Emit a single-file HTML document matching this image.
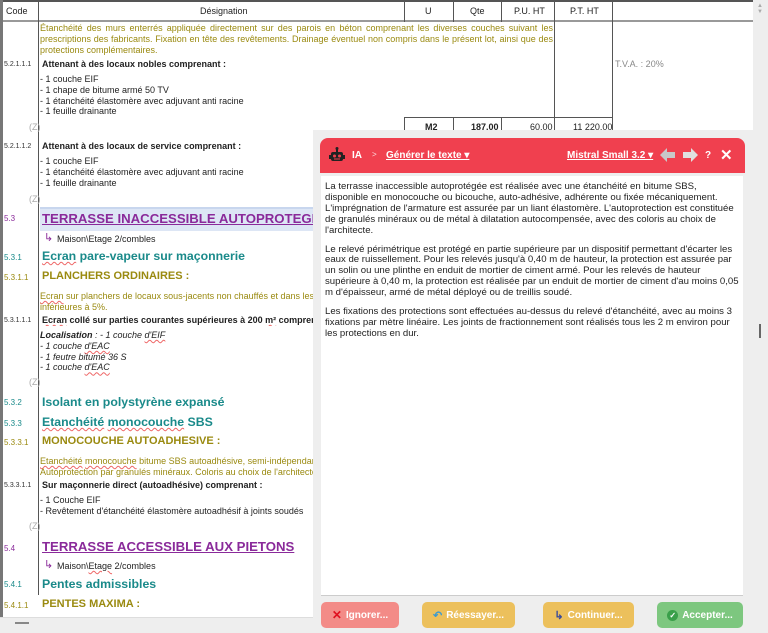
<!DOCTYPE html>
<html><head><meta charset="utf-8"><style>
*{margin:0;padding:0;box-sizing:border-box}
body{width:768px;height:633px;overflow:hidden;background:#fff;font-family:"Liberation Sans",Arial,sans-serif;position:relative;color:#222}
.a{position:absolute;white-space:nowrap}
.code{font-size:7px;color:#333;left:4px}
.t{font-size:9px;color:#222;left:40px;line-height:10.8px}
.z{font-size:9px;color:#aaa;left:29px}
.ol{color:#9a8a10}
.tl{color:#1a8a8a}
.pu{color:#8a2a9a}
.h1{font-size:13.2px;font-weight:bold;left:42px}
.h2{font-size:12.3px;font-weight:bold;left:42px}
.h3{font-size:11px;font-weight:bold;left:42px}
.sq{text-decoration:underline wavy #e66;text-decoration-thickness:1px}
.j{display:block;text-align:justify;text-align-last:justify;width:513px}
.btn{position:absolute;top:602px;height:26px;border-radius:5px;color:#fff;font-size:10px;font-weight:bold;display:flex;align-items:center;justify-content:center;gap:4px}
</style></head><body>
<div class="a" style="left:0;top:0;width:3px;height:633px;background:#777"></div>
<div class="a" style="left:3px;top:0;width:750px;height:22px;border-top:2px solid #555;border-bottom:2px solid #999"></div>
<div class="a" style="left:38px;top:0;width:1px;height:22px;background:#555"></div>
<div class="a" style="left:404px;top:0;width:1px;height:22px;background:#555"></div>
<div class="a" style="left:453px;top:0;width:1px;height:22px;background:#555"></div>
<div class="a" style="left:501px;top:0;width:1px;height:22px;background:#555"></div>
<div class="a" style="left:554px;top:0;width:1px;height:22px;background:#555"></div>
<div class="a" style="left:612px;top:0;width:1px;height:22px;background:#555"></div>
<div class="a" style="left:6px;top:6px;font-size:9px">Code</div>
<div class="a" style="left:200px;top:6px;font-size:9px">Désignation</div>
<div class="a" style="left:425px;top:6px;font-size:9px">U</div>
<div class="a" style="left:470px;top:6px;font-size:9px">Qte</div>
<div class="a" style="left:514px;top:6px;font-size:9px">P.U. HT</div>
<div class="a" style="left:570px;top:6px;font-size:9px">P.T. HT</div>
<div class="a" style="left:38px;top:22px;width:1px;height:573px;background:#555"></div>
<div class="a" style="left:554px;top:22px;width:1px;height:112px;background:#555"></div>
<div class="a" style="left:612px;top:22px;width:1px;height:112px;background:#555"></div>
<div class="a" style="left:404px;top:117px;width:209px;height:1px;background:#555"></div>
<div class="a" style="left:404px;top:117px;width:1px;height:17px;background:#555"></div>
<div class="a" style="left:453px;top:117px;width:1px;height:17px;background:#555"></div>
<div class="a" style="left:501px;top:117px;width:1px;height:17px;background:#555"></div>
<div class="a" style="left:425px;top:122px;font-size:9px;font-weight:bold">M2</div>
<div class="a" style="left:471px;top:122px;font-size:9px;font-weight:bold">187,00</div>
<div class="a" style="left:530px;top:122px;font-size:9px">60,00</div>
<div class="a" style="left:573px;top:122px;font-size:9px">11 220,00</div>
<div class="a" style="left:615px;top:59px;font-size:9px;color:#888">T.V.A. : 20%</div>
<div class="a" style="left:753px;top:0;width:15px;height:633px;background:#eee"></div>
<div class="a" style="left:757px;top:3px;font-size:6px;color:#aaa">▲<br>▼</div>
<div class="a" style="left:759px;top:324px;width:2px;height:14px;background:#666"></div>

<div class="a t ol" style="top:23px">
<span class="j">Étanchéité des murs enterrés appliquée directement sur des parois en béton comprenant les diverses couches suivant les</span>
<span class="j">prescriptions des fabricants. Fixation en tête des revêtements. Drainage éventuel non compris dans le présent lot, ainsi que des</span>
<span>protections complémentaires.</span></div>
<div class="a code" style="top:61px">5.2.1.1.1</div>
<div class="a t" style="top:59px;left:42px;font-weight:bold">Attenant à des locaux nobles comprenant :</div>
<div class="a t" style="top:74px">- 1 couche EIF<br>- 1 chape de bitume armé 50 TV<br>- 1 étanchéité élastomère avec adjuvant anti racine<br>- 1 feuille drainante</div>
<div class="a z" style="top:122px">(Z)</div>
<div class="a code" style="top:143px">5.2.1.1.2</div>
<div class="a t" style="top:141px;left:42px;font-weight:bold">Attenant à des locaux de service comprenant :</div>
<div class="a t" style="top:156px">- 1 couche EIF<br>- 1 étanchéité élastomère avec adjuvant anti racine<br>- 1 feuille drainante</div>
<div class="a z" style="top:194px">(Z)</div>
<div class="a" style="left:40px;top:207px;width:273px;height:24px;background:#dde6f5;border-top:2px solid #c8d6ee"></div>
<div class="a code pu" style="top:214px;font-size:8px">5.3</div>
<div class="a h1 pu" style="top:211px;text-decoration:underline;overflow:hidden;width:271px">TERRASSE INACCESSIBLE AUTOPROTEGÉE</div>
<div class="a" style="left:44px;top:231px;font-size:11px;color:#8a2a9a">↳</div>
<div class="a t" style="top:234px;left:57px">Maison\Etage 2/combles</div>
<div class="a code tl" style="top:253px;font-size:8px">5.3.1</div>
<div class="a h2 tl" style="top:249px"><span class="sq">Ecran</span> pare-vapeur sur maçonnerie</div>
<div class="a code ol" style="top:273px;font-size:8px">5.3.1.1</div>
<div class="a h3 ol" style="top:270px">PLANCHERS ORDINAIRES :</div>
<div class="a t ol" style="top:291px;width:273px;overflow:hidden"><span class="sq">Ecran</span> sur planchers de locaux sous-jacents non chauffés et dans les<br>inférieures à 5%.</div>
<div class="a code" style="top:317px">5.3.1.1.1</div>
<div class="a t" style="top:315px;left:42px;font-weight:bold;width:271px;overflow:hidden"><span class="sq">Ecran</span> collé sur parties courantes supérieures à 200 <span class="sq">m²</span> comprenant :</div>
<div class="a t" style="top:330px;font-style:italic"><b>Localisation</b> : - 1 couche <span class="sq">d'EIF</span><br>- 1 couche <span class="sq">d'EAC</span><br>- 1 feutre bitumé 36 S<br>- 1 couche <span class="sq">d'EAC</span></div>
<div class="a z" style="top:377px">(Z)</div>
<div class="a code tl" style="top:398px;font-size:8px">5.3.2</div>
<div class="a h2 tl" style="top:395px">Isolant en polystyrène expansé</div>
<div class="a code tl" style="top:419px;font-size:8px">5.3.3</div>
<div class="a h2 tl" style="top:415px"><span class="sq">Etanchéité</span> <span class="sq">monocouche</span> SBS</div>
<div class="a code ol" style="top:438px;font-size:8px">5.3.3.1</div>
<div class="a h3 ol" style="top:435px">MONOCOUCHE AUTOADHESIVE :</div>
<div class="a t ol" style="top:456px;width:273px;overflow:hidden"><span class="sq">Etanchéité</span> <span class="sq">monocouche</span> bitume SBS autoadhésive, semi-indépendante<br>Autoprotection par granulés minéraux. Coloris au choix de l'architecte.</div>
<div class="a code" style="top:482px">5.3.3.1.1</div>
<div class="a t" style="top:480px;left:42px;font-weight:bold">Sur maçonnerie direct (autoadhésive) comprenant :</div>
<div class="a t" style="top:495px">- 1 Couche EIF<br>- Revêtement d'étanchéité élastomère autoadhésif à joints soudés</div>
<div class="a z" style="top:521px">(Z)</div>
<div class="a code pu" style="top:544px;font-size:8px">5.4</div>
<div class="a h1 pu" style="top:539px;text-decoration:underline">TERRASSE ACCESSIBLE AUX PIETONS</div>
<div class="a" style="left:44px;top:558px;font-size:11px;color:#8a2a9a">↳</div>
<div class="a t" style="top:561px;left:57px">Maison\<span class="sq">Etage</span> 2/combles</div>
<div class="a code tl" style="top:580px;font-size:8px">5.4.1</div>
<div class="a h2 tl" style="top:577px">Pentes admissibles</div>
<div class="a code ol" style="top:601px;font-size:8px">5.4.1.1</div>
<div class="a h3 ol" style="top:598px">PENTES MAXIMA :</div>
<div class="a" style="left:0;top:617px;width:313px;height:16px;background:#eee;border-top:1px solid #ddd"></div>
<div class="a" style="left:15px;top:622px;width:14px;height:2px;background:#888"></div>

<div class="a" style="left:313px;top:130px;width:440px;height:503px;background:#eeeeee"></div>
<div class="a" style="left:320px;top:138px;width:425px;height:35px;background:#f0404f;border-radius:8px 8px 0 0;color:#fff;font-size:10px;font-weight:bold">
 <svg class="a" style="left:8px;top:9px" width="18" height="17" viewBox="0 0 18 17"><rect x="3" y="5" width="12" height="9" rx="2" fill="#222"/><rect x="1" y="8" width="2" height="4" fill="#222"/><rect x="15" y="8" width="2" height="4" fill="#222"/><rect x="8" y="1" width="2" height="4" fill="#222"/><circle cx="9" cy="1.5" r="1.5" fill="#222"/><circle cx="6.5" cy="9" r="1.5" fill="#f0404f"/><circle cx="11.5" cy="9" r="1.5" fill="#f0404f"/><rect x="6" y="11.5" width="6" height="1" fill="#f0404f"/></svg>
 <span class="a" style="left:32px;top:12px">IA</span>
 <span class="a" style="left:52px;top:12px;font-weight:normal;font-size:8px;opacity:.8">&gt;</span>
 <span class="a" style="left:66px;top:12px;text-decoration:underline">Générer le texte ▾</span>
 <span class="a" style="left:247px;top:12px;text-decoration:underline">Mistral Small 3.2 ▾</span>
 <svg class="a" style="left:340px;top:10px" width="40" height="14" viewBox="0 0 40 14"><path d="M0 7 L7 0 V4 H15 V10 H7 V14 Z" fill="#c8c8c8"/><path d="M38 7 L31 0 V4 H23 V10 H31 V14 Z" fill="#e0e0e0"/></svg>
 <span class="a" style="left:385px;top:12px">?</span>
 <span class="a" style="left:400px;top:8px;font-size:15px">✕</span>
</div>
<div class="a" style="left:321px;top:176px;width:422px;height:420px;background:#fff;border-bottom:1px solid #ccc;font-size:9.6px;line-height:10.9px;padding:6px 4px;color:#222">
La terrasse inaccessible autoprotégée est réalisée avec une étanchéité en bitume SBS,<br>disponible en monocouche ou bicouche, auto-adhésive, adhérente ou fixée mécaniquement.<br>L'imprégnation de l'armature est assurée par un liant élastomère. L'autoprotection est constituée<br>de granulés minéraux ou de métal à dilatation autocompensée, avec des coloris au choix de<br>l'architecte.<br><div style="height:8px"></div>Le relevé périmétrique est protégé en partie supérieure par un dispositif permettant d'écarter les<br>eaux de ruissellement. Pour les relevés jusqu'à 0,40 m de hauteur, la protection est assurée par<br>un solin ou une plinthe en enduit de mortier de ciment armé. Pour les relevés de hauteur<br>supérieure à 0,40 m, la protection est réalisée par un enduit de mortier de ciment d'au moins 0,05<br>m d'épaisseur, armé de métal déployé ou de treillis soudé.<br><div style="height:8px"></div>Les fixations des protections sont effectuées au-dessus du relevé d'étanchéité, avec au moins 3<br>fixations par mètre linéaire. Les joints de fractionnement sont réalisés tous les 2 m environ pour<br>les protections en dur.
</div>
<div class="btn" style="left:321px;width:78px;background:#f38b87"><span style="color:#e01020;font-size:12px">✕</span>Ignorer...</div>
<div class="btn" style="left:422px;width:93px;background:#ecc05c"><span style="color:#3a9ad0;font-size:11px">↶</span>Réessayer...</div>
<div class="btn" style="left:543px;width:91px;background:#ecc05c"><span style="color:#3a4a9a;font-size:11px">↳</span>Continuer...</div>
<div class="btn" style="left:657px;width:86px;background:#7dc77f"><span style="display:inline-block;width:11px;height:11px;border-radius:50%;background:#3aa04a;font-size:8px;line-height:11px;text-align:center">✓</span>Accepter...</div>
</body></html>
